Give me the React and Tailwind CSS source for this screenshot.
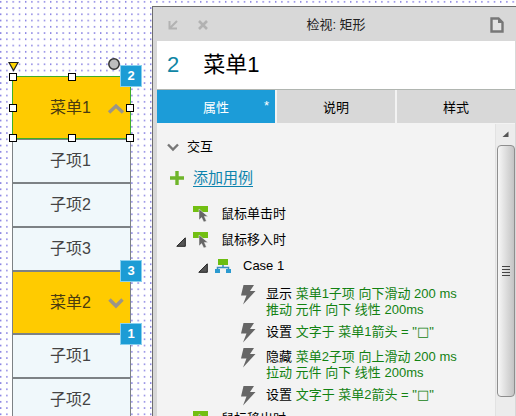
import React from "react";

const font = "font-['Liberation_Sans','Noto_Sans_CJK_SC',sans-serif]";

// Dotted design canvas
const DotGrid = () => (
  <svg className="absolute inset-0 w-full h-full" aria-hidden="true">
    <defs>
      <pattern id="dots" width="6.25" height="6.25" patternUnits="userSpaceOnUse">
        <rect x="0.1" y="1.2" width="1.2" height="1.2" fill="#3a30d0" />
      </pattern>
    </defs>
    <rect width="100%" height="100%" fill="url(#dots)" />
  </svg>
);

const Badge = ({ children }) => (
  <span className="absolute z-10 -top-3 -right-3 w-[22px] h-[22px] border border-[#8ad0ee] bg-[#1c9cd5] text-white text-[13px] font-bold flex items-center justify-center">
    {children}
  </span>
);

const handles = [
  "-left-1 -top-1",
  "left-1/2 -ml-1 -top-1",
  "-right-1 -top-1",
  "-left-1 top-1/2 -mt-1",
  "-right-1 top-1/2 -mt-1",
  "-left-1 -bottom-1",
  "left-1/2 -ml-1 -bottom-1",
  "-right-1 -bottom-1",
];

const Selection = () => (
  <>
    <span className="absolute -inset-px border border-[#3fae2a]" />
    {handles.map((pos) => (
      <span
        key={pos}
        className={`absolute w-2 h-2 border border-black bg-white ${pos}`}
      />
    ))}
    <svg className="absolute -left-[5px] -top-4 w-[11px] h-[11px]" viewBox="0 0 11 11">
      <path d="M1 1.5H10L5.5 9.5Z" fill="#ffd500" stroke="#222" strokeWidth="1.2" />
    </svg>
    <svg className="absolute right-[10px] -top-[19px] w-3 h-3" viewBox="0 0 12 12">
      <circle cx="6" cy="6" r="5.2" fill="#bdbdbd" stroke="#333" strokeWidth="1.5" />
    </svg>
  </>
);

const Chevron = ({ up }) => (
  <svg className="absolute right-[5px] top-1/2 -mt-[6px] w-[18px] h-3" viewBox="0 0 18 12">
    <path
      d={up ? "M2 10.5L9 4L16 10.5" : "M2.5 2.5L9 9L15.5 2.5"}
      fill="none"
      stroke="#9b9588"
      strokeWidth="3.4"
    />
  </svg>
);

const MenuBlock = ({ label, up, badge, selected }) => (
  <div
    className={`relative h-[63px] border border-[#7d8285] bg-[#ffcb00] flex items-center justify-center pr-[2px] text-base text-[#4a3c10] ${
      selected ? "z-10" : ""
    }`}
  >
    {label}
    <Chevron up={up} />
    {selected && <Selection />}
    <Badge>{badge}</Badge>
  </div>
);

const SubItem = ({ label, badge }) => (
  <div className="relative h-11 border border-[#7d8285] bg-[#f0f8fb] flex items-center justify-center pr-[2px] text-base text-[#444]">
    {label}
    {badge && <Badge>{badge}</Badge>}
  </div>
);

const Canvas = () => (
  <main className="relative w-[152px] shrink-0 pl-3 pr-[21px] pt-[76px]">
    <MenuBlock label="菜单1" up badge="2" selected />
    <SubItem label="子项1" />
    <SubItem label="子项2" />
    <SubItem label="子项3" />
    <MenuBlock label="菜单2" badge="3" />
    <SubItem label="子项1" badge="1" />
    <SubItem label="子项2" />
  </main>
);

const Triangle = () => (
  <svg className="w-[10px] h-[10px]" viewBox="0 0 10 10">
    <path d="M9.3 0.8V9.3H0.8Z" fill="#555" stroke="#222" />
  </svg>
);

const EventIcon = () => (
  <svg className="w-4 h-4" viewBox="0 0 16 16">
    <path d="M0 0H15V6H0Z" fill="#72bf12" />
    <path
      d="M6 3V14L8.6 11.6L10.8 16L13.4 15L11.4 10.4H15Z"
      fill="#666"
      stroke="#f3f3f3"
      strokeWidth="0.5"
    />
  </svg>
);

const CaseIcon = () => (
  <svg className="w-4 h-4" viewBox="0 0 16 16">
    <path d="M3 1H13V7H3Z" fill="#6cbd10" />
    <path d="M8 7V9.5M2.5 12V9.5H13.5V12" fill="none" stroke="#3a8fc0" strokeWidth="1.5" />
    <path d="M0 11H5V15H0ZM11 11H16V15H11Z" fill="#2b9ad0" />
  </svg>
);

const Bolt = () => (
  <svg className="w-4 h-5 shrink-0" viewBox="0 0 16 20">
    <path d="M3.5 0H14L10 6H15.5L3 19.5L6.5 10.5H1Z" fill="#666" />
  </svg>
);

const EventRow = ({ label, open }) => (
  <div className="flex items-center h-[26px] pl-[19px] text-[13px]">
    <span className="w-[17px] pt-1">{open && <Triangle />}</span>
    <EventIcon />
    <span className="ml-3">{label}</span>
  </div>
);

const actions = [
  { verb: "显示", text: "菜单1子项 向下滑动 200 ms", more: "推动 元件 向下 线性 200ms" },
  { verb: "设置", text: "文字于 菜单1箭头 =", glyph: "□" },
  { verb: "隐藏", text: "菜单2子项 向上滑动 200 ms", more: "拉动 元件 向下 线性 200ms" },
  { verb: "设置", text: "文字于 菜单2箭头 =", glyph: "□" },
];

const ActionRow = ({ verb, text, more, glyph }) => (
  <li className="flex gap-[10px] pb-[5px] last:pb-0 text-[13px] leading-4">
    <Bolt />
    <p className="pt-px text-[#128212] whitespace-nowrap">
      <span className="text-black">{verb}</span> {text}
      {glyph && (
        <>
          {' "'}
          <span className="font-['DejaVu_Sans',sans-serif] text-[13px] leading-none">{glyph}</span>
          {'"'}
        </>
      )}
      {more && (
        <>
          <br />
          {more}
        </>
      )}
    </p>
  </li>
);

const Scrollbar = () => (
  <div className="w-5 shrink-0 bg-[#ececec] border-l border-[#e2e2e2] flex flex-col items-center">
    <svg className="w-2 h-[21px] shrink-0" viewBox="0 0 8 21">
      <path d="M0.5 13L6.5 7.5V13Z" fill="#555" />
    </svg>
    <div className="w-[18px] h-[252px] shrink-0 rounded-sm border border-[#8e8e8e] bg-linear-to-r from-[#f7f7f7] to-[#c4c4c4] flex flex-col items-center justify-center gap-[2px]">
      <span className="w-2 h-px bg-[#444]" />
      <span className="w-2 h-px bg-[#444]" />
      <span className="w-2 h-px bg-[#444]" />
      <span className="w-2 h-px bg-[#444]" />
    </div>
  </div>
);

const Inspector = () => (
  <aside className="relative flex-1 min-w-0 mt-[6px] flex flex-col border-t border-l border-[#6e6e6e] bg-[#d8d8d8] pl-1 pr-px text-black">
    <header className="h-[34px] shrink-0 grid grid-cols-[1fr_auto_1fr] items-center px-[11px] pt-px text-[13px] text-[#222]">
      <div className="flex gap-5">
        <button aria-label="停靠">
          <svg className="w-[10px] h-[10px]" viewBox="0 0 10 10">
            <path d="M1.5 1V8.5H9M2 8L9 1" fill="none" stroke="#b2b2b2" strokeWidth="2" />
          </svg>
        </button>
        <button aria-label="关闭">
          <svg className="w-[10px] h-[10px]" viewBox="0 0 10 10">
            <path d="M1 1L9 9M9 1L1 9" stroke="#b2b2b2" strokeWidth="2.6" />
          </svg>
        </button>
      </div>
      <h1>检视: 矩形</h1>
      <button aria-label="页面" className="justify-self-end">
        <svg className="w-[14px] h-4" viewBox="0 0 14 16">
          <path d="M1.5 1.5H8.5L12.5 5.5V14.5H1.5Z" fill="#e4e4e4" stroke="#777" strokeWidth="2.4" />
          <path d="M8 1V6H13Z" fill="#777" />
        </svg>
      </button>
    </header>

    <div className="h-[49px] shrink-0 bg-white border-b border-[#b0b5b0] flex items-center gap-6 pl-[10px] pb-[2px] text-[22px]">
      <span className="text-[#0f86a5]">2</span>
      <span>菜单1</span>
    </div>

    <nav className="h-[34px] shrink-0 flex gap-[2px] bg-[#f3f3f3] pb-px text-[13px]">
      <button className="relative flex-1 pt-[2px] bg-[#1c9cd8] text-white">
        属性
        <span className="absolute right-[6px] top-[6px]">*</span>
      </button>
      <button className="flex-1 pt-[2px] bg-[#d8d8d8]">说明</button>
      <button className="flex-1 pt-[2px] bg-[#d8d8d8]">样式</button>
    </nav>

    <div className="flex flex-1 min-h-0 bg-[#f3f3f3]">
      <section className="flex-1 min-w-0 pt-[13px]">
        <h2 className="flex items-center h-5 pl-[10px] gap-2 text-[13px]">
          <svg className="w-3 h-3" viewBox="0 0 12 12">
            <path d="M1 3.5L6 8.5L11 3.5" fill="none" stroke="#777" strokeWidth="2.4" />
          </svg>
          交互
        </h2>
        <div className="flex items-center h-[42px] mb-[2px] pl-[13px] gap-[9px]">
          <svg className="w-[14px] h-[14px]" viewBox="0 0 14 14">
            <path d="M7 0V14M0 7H14" stroke="#6fb52a" strokeWidth="3.4" />
          </svg>
          <a href="#" className="text-[15px] text-[#0d83ad] underline underline-offset-3">
            添加用例
          </a>
        </div>
        <EventRow label="鼠标单击时" />
        <EventRow label="鼠标移入时" open />
        <div className="flex items-center h-[26px] pl-[41px] text-[13px]">
          <span className="w-[17px] pt-1">
            <Triangle />
          </span>
          <CaseIcon />
          <span className="ml-3">Case 1</span>
        </div>
        <ul className="pl-[83px] pt-[6px]">
          {actions.map((a, i) => (
            <ActionRow key={i} {...a} />
          ))}
        </ul>
        <EventRow label="鼠标移出时" />
      </section>
      <Scrollbar />
    </div>
  </aside>
);

const App = () => (
  <div className={`relative flex h-screen overflow-hidden bg-white ${font}`}>
    <DotGrid />
    <Canvas />
    <Inspector />
  </div>
);

export default App;
